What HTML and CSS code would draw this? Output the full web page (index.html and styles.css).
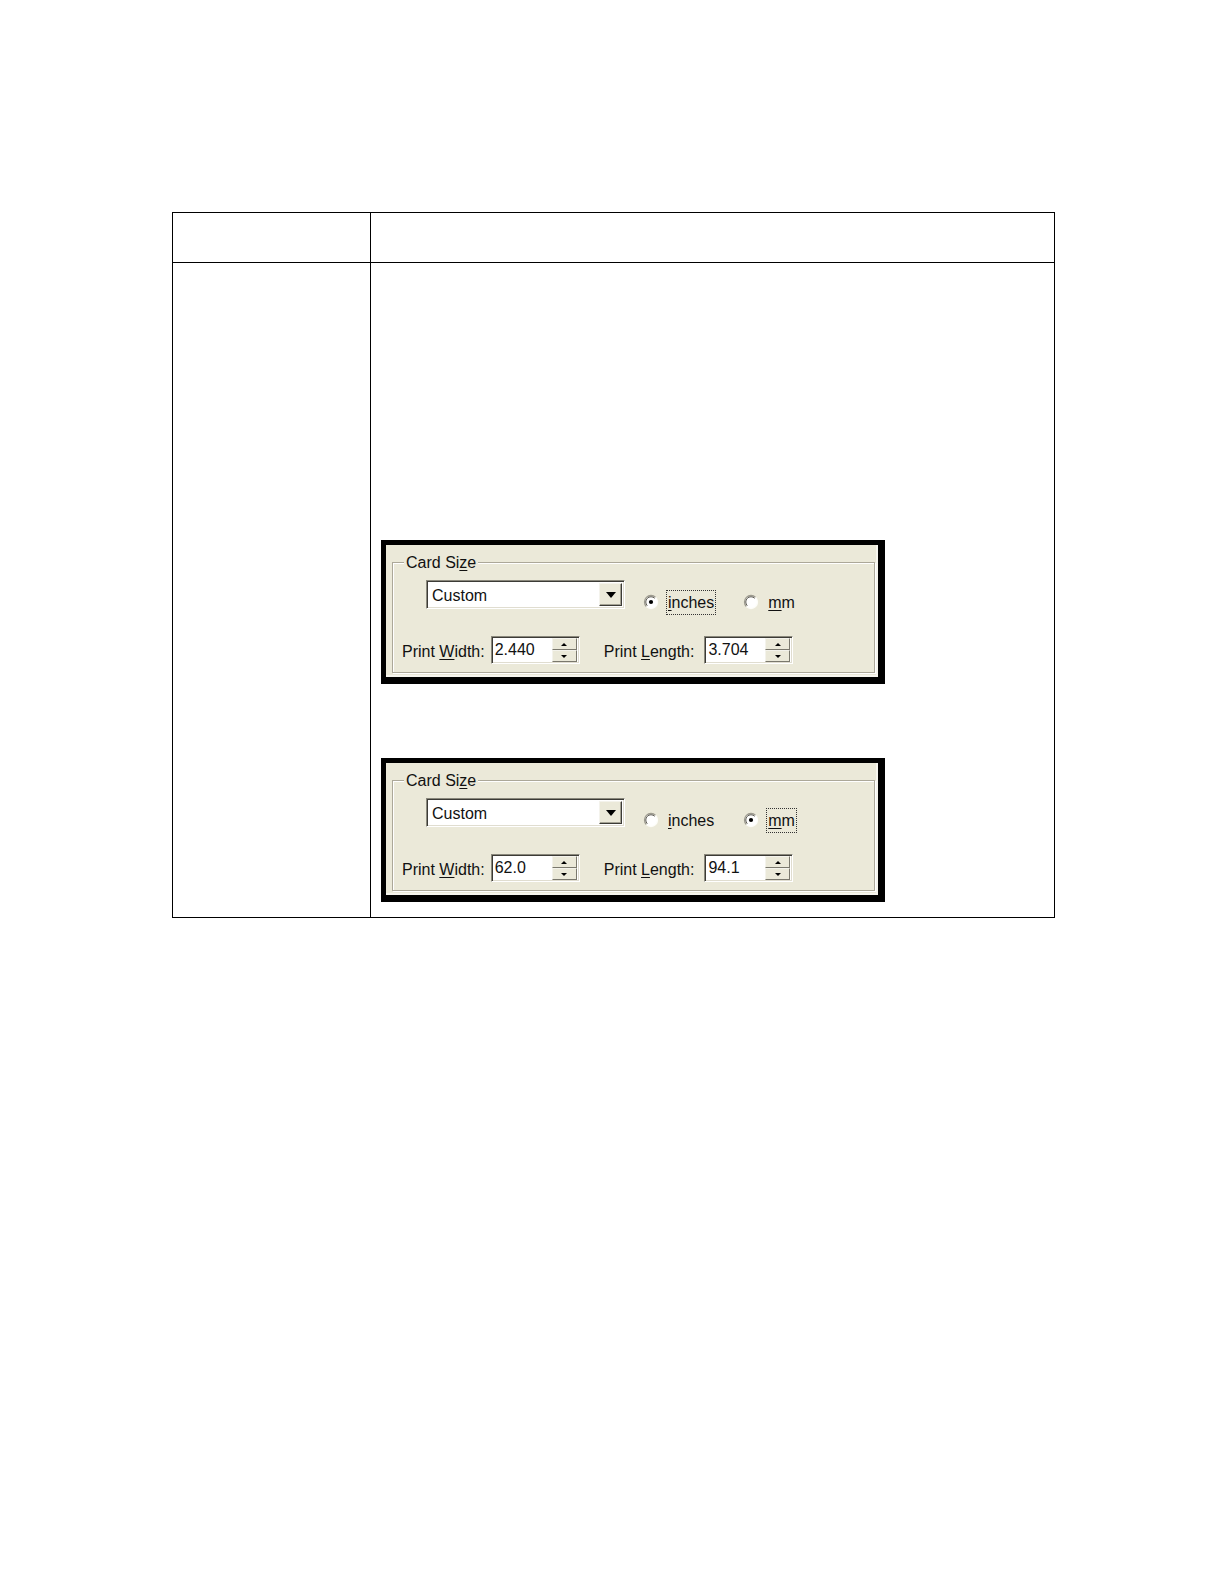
FILE: index.html
```html
<!DOCTYPE html>
<html>
<head>
<meta charset="utf-8">
<title>Card Size</title>
<link rel="stylesheet" href="styles.css">
</head>
<body>
<div class="doc">
  <div class="row head">
    <div class="c1"></div>
    <div class="c2"></div>
  </div>
  <div class="row main">
    <div class="c1"></div>
    <div class="c2 content">

      <div class="shot">
        <div class="group">
          <span class="legend">Card Si<u>z</u>e</span>
          <div class="line1">
            <div class="combo">
              <span class="combo-text">Custom</span>
              <span class="drop"><span class="tri"></span></span>
            </div>
            <div class="radios">
              <span class="radio">
                <svg class="rb" width="16" height="16" viewBox="0 0 16 16"><circle cx="8" cy="8" r="6.5" fill="#fff"/><path d="M3.4 12.6 A6.5 6.5 0 0 1 12.6 3.4" fill="none" stroke="#9c9a8e" stroke-width="1.3"/><path d="M4.3 11.7 A5.2 5.2 0 0 1 11.7 4.3" fill="none" stroke="#5f5d55" stroke-width="1"/><path d="M12.6 3.4 A6.5 6.5 0 0 1 3.4 12.6" fill="none" stroke="#fdfdf8" stroke-width="1.3"/><circle cx="8" cy="8" r="2.1" fill="#000"/></svg>
                <span class="rl focus"><u>i</u>nches</span>
              </span>
              <span class="radio r2">
                <svg class="rb" width="16" height="16" viewBox="0 0 16 16"><circle cx="8" cy="8" r="6.5" fill="#fff"/><path d="M3.4 12.6 A6.5 6.5 0 0 1 12.6 3.4" fill="none" stroke="#9c9a8e" stroke-width="1.3"/><path d="M4.3 11.7 A5.2 5.2 0 0 1 11.7 4.3" fill="none" stroke="#5f5d55" stroke-width="1"/><path d="M12.6 3.4 A6.5 6.5 0 0 1 3.4 12.6" fill="none" stroke="#fdfdf8" stroke-width="1.3"/></svg>
                <span class="rl"><u>m</u>m</span>
              </span>
            </div>
          </div>
          <div class="line2">
            <span class="lbl lw">Print <u>W</u>idth:</span>
            <div class="edit"><span class="val">2.440</span><span class="spin"><span class="sb"><span class="up"></span></span><span class="sb"><span class="dn"></span></span></span></div>
            <span class="lbl ll">Print <u>L</u>ength:</span>
            <div class="edit"><span class="val">3.704</span><span class="spin"><span class="sb"><span class="up"></span></span><span class="sb"><span class="dn"></span></span></span></div>
          </div>
        </div>
      </div>

      <div class="shot second">
        <div class="group">
          <span class="legend">Card Si<u>z</u>e</span>
          <div class="line1">
            <div class="combo">
              <span class="combo-text">Custom</span>
              <span class="drop"><span class="tri"></span></span>
            </div>
            <div class="radios">
              <span class="radio">
                <svg class="rb" width="16" height="16" viewBox="0 0 16 16"><circle cx="8" cy="8" r="6.5" fill="#fff"/><path d="M3.4 12.6 A6.5 6.5 0 0 1 12.6 3.4" fill="none" stroke="#9c9a8e" stroke-width="1.3"/><path d="M4.3 11.7 A5.2 5.2 0 0 1 11.7 4.3" fill="none" stroke="#5f5d55" stroke-width="1"/><path d="M12.6 3.4 A6.5 6.5 0 0 1 3.4 12.6" fill="none" stroke="#fdfdf8" stroke-width="1.3"/></svg>
                <span class="rl"><u>i</u>nches</span>
              </span>
              <span class="radio r2">
                <svg class="rb" width="16" height="16" viewBox="0 0 16 16"><circle cx="8" cy="8" r="6.5" fill="#fff"/><path d="M3.4 12.6 A6.5 6.5 0 0 1 12.6 3.4" fill="none" stroke="#9c9a8e" stroke-width="1.3"/><path d="M4.3 11.7 A5.2 5.2 0 0 1 11.7 4.3" fill="none" stroke="#5f5d55" stroke-width="1"/><path d="M12.6 3.4 A6.5 6.5 0 0 1 3.4 12.6" fill="none" stroke="#fdfdf8" stroke-width="1.3"/><circle cx="8" cy="8" r="2.1" fill="#000"/></svg>
                <span class="rl focus"><u>m</u>m</span>
              </span>
            </div>
          </div>
          <div class="line2">
            <span class="lbl lw">Print <u>W</u>idth:</span>
            <div class="edit"><span class="val">62.0</span><span class="spin"><span class="sb"><span class="up"></span></span><span class="sb"><span class="dn"></span></span></span></div>
            <span class="lbl ll">Print <u>L</u>ength:</span>
            <div class="edit"><span class="val">94.1</span><span class="spin"><span class="sb"><span class="up"></span></span><span class="sb"><span class="dn"></span></span></span></div>
          </div>
        </div>
      </div>

    </div>
  </div>
</div>
</body>
</html>
```

FILE: styles.css
```css
html, body {
  margin: 0;
  padding: 0;
  background: #fff;
}
body {
  font-family: "Liberation Sans", Arial, sans-serif;
  font-size: 16px;
  color: #111;
}
.doc {
  box-sizing: border-box;
  margin: 212px 0 0 172px;
  width: 883px;
  border: 1px solid #000;
}
.row {
  display: flex;
}
.head {
  height: 49px;
  border-bottom: 1px solid #000;
}
.c1 {
  width: 197px;
  border-right: 1px solid #000;
  flex: none;
}
.c2 {
  flex: 1;
}
.content {
  padding: 277px 0 15px 10px;
}
.shot {
  box-sizing: border-box;
  width: 504px;
  height: 144px;
  border-style: solid;
  border-color: #000;
  border-width: 5px 7px 7px 5px;
  background: #ebe9d9;
  padding: 17px 0 0 6px;
  box-shadow: inset -2px -2px 0 #f6f5ee;
}
.second {
  margin-top: 74px;
}
.group {
  position: relative;
  box-sizing: border-box;
  width: 483px;
  height: 111px;
  border: 1px solid #aca899;
  box-shadow: 1px 1px 0 #fff, inset 1px 1px 0 #fff;
  padding: 17px 0 0 9px;
}
.legend {
  position: absolute;
  top: -10px;
  left: 11px;
  padding: 0 2px;
  line-height: 20px;
  background: #ebe9d9;
}
.line1 {
  display: flex;
  align-items: flex-start;
}
.combo {
  box-sizing: border-box;
  margin-left: 24px;
  width: 199px;
  height: 29px;
  background: #fff;
  border: 1px solid;
  border-color: #8a887c #fff #fff #8a887c;
  box-shadow: inset 1px 1px 0 #3c3b36, inset -1px -1px 0 #e0ddd0;
  display: flex;
  align-items: center;
  justify-content: space-between;
  padding: 2px 2px 2px 5px;
}
.combo-text {
  line-height: 20px;
  padding-top: 2px;
}
.drop {
  box-sizing: border-box;
  width: 23px;
  height: 23px;
  background: #ebe9d9;
  border: 1px solid;
  border-color: #f4f3ec #3c3b36 #3c3b36 #f4f3ec;
  box-shadow: inset -1px -1px 0 #a4a294;
  display: flex;
  align-items: center;
  justify-content: center;
}
.tri {
  width: 0;
  height: 0;
  border-left: 5px solid transparent;
  border-right: 5px solid transparent;
  border-top: 6px solid #000;
  margin-top: 1px;
}
.radios {
  display: flex;
  margin-top: 10px;
  margin-left: 18px;
}
.radio {
  display: flex;
  align-items: center;
  gap: 7px;
}
.r2 {
  margin-left: 27px;
}
.rb {
  display: block;
  margin-top: -2px;
}
.rl {
  line-height: 20px;
  padding: 2px 1px 1px 1px;
  border: 1px solid transparent;
}
.focus {
  border: 1px dotted #333;
}
.line2 {
  display: flex;
  align-items: center;
  margin-top: 21px;
}
.lbl {
  line-height: 20px;
  padding-top: 3px;
}
.lw {
  margin-right: 6px;
}
.ll {
  margin-left: 24px;
  margin-right: 10px;
}
.edit {
  box-sizing: border-box;
  width: 89px;
  height: 28px;
  background: #fff;
  border: 1px solid;
  border-color: #8a887c #fff #fff #8a887c;
  box-shadow: inset 1px 1px 0 #3c3b36, inset -1px -1px 0 #e0ddd0;
  display: flex;
  align-items: center;
  justify-content: space-between;
  padding: 2px 2px 2px 3px;
}
.val {
  line-height: 20px;
}
.spin {
  box-sizing: border-box;
  width: 25px;
  height: 24px;
  display: flex;
  flex-direction: column;
  background: #ebe9d9;
}
.sb {
  flex: 1;
  box-sizing: border-box;
  border: 1px solid;
  border-color: #f4f3ec #7a786d #7a786d #f4f3ec;
  display: flex;
  align-items: center;
  justify-content: center;
}
.up {
  width: 0;
  height: 0;
  border-left: 3px solid transparent;
  border-right: 3px solid transparent;
  border-bottom: 3px solid #000;
}
.dn {
  width: 0;
  height: 0;
  border-left: 3px solid transparent;
  border-right: 3px solid transparent;
  border-top: 3px solid #000;
}
u {
  text-decoration-thickness: 1px;
  text-underline-offset: 2px;
}
```
